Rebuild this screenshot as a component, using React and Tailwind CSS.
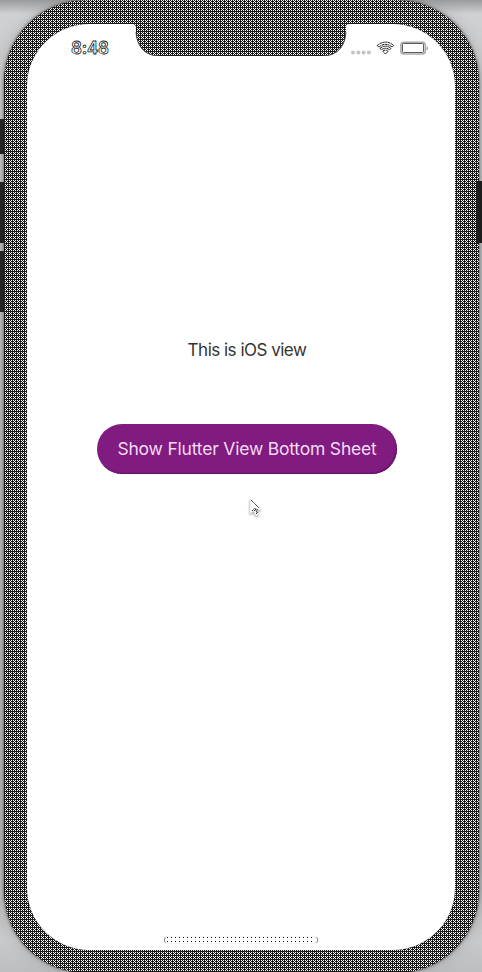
const dither =
  "bg-[#1a1a1a] bg-[conic-gradient(at_1px_1px,transparent_75%,#fff_0),conic-gradient(at_1px_1px,transparent_75%,#fff_0)] bg-[length:2px_2px,4px_4px] bg-[position:1px_0px,2px_1px]";

function StatusIcons() {
  return (
    <svg width="80" height="16" viewBox="0 0 80 16" className="mt-[16px] shrink-0">
      <g fill="#c4c4c4">
        <circle cx="3" cy="12.5" r="2" />
        <circle cx="8.3" cy="12.5" r="2" />
        <circle cx="13.6" cy="12.5" r="2" />
        <circle cx="18.9" cy="12.5" r="2" />
      </g>
      <g fill="none" stroke="#111" strokeWidth="1" strokeDasharray="2.4 0.5">
        <path d="M27.3 5.4Q35.5 -1.2 43.7 5.4L42.2 7.1Q35.5 1.6 28.8 7.1Z" />
        <path d="M30 8.4Q35.5 3.9 41 8.4L39.6 9.9Q35.5 6.6 31.4 9.9Z" />
        <path d="M32.8 11.2Q35.5 9 38.2 11.2L35.5 14Z" />
      </g>
      <rect x="50.9" y="2.4" width="24.4" height="11.6" rx="3" fill="#fff" stroke="#aaa" strokeWidth="1.6" />
      <rect x="52.5" y="3.5" width="21" height="9" rx="1" fill="#fff" stroke="#333" strokeWidth="0.8" />
      <path d="M76.500 6v4.500Q78 10 78 8.200T76.500 6Z" fill="#aaa" />
    </svg>
  );
}

function Notch() {
  return (
    <div className={`${dither} absolute left-[105px] top-0 flex h-[32px] w-[218px] justify-between rounded-b-[25px]`}>
      <div className="h-full w-[4px] rounded-tr-[4px] bg-white" />
      <div className="h-full w-[4px] rounded-tl-[4px] bg-white" />
    </div>
  );
}

function Corner({ flip }) {
  return (
    <svg
      width="30"
      height="24"
      viewBox="0 0 30 24"
      className={flip ? "absolute left-[293px] top-[8px] -scale-x-100" : "absolute left-[105px] top-[8px]"}
    >
      <path d="M0 0H4C4.500 13 12 24 27 24H0Z" fill="#fff" />
      <path d="M4 0C4.500 13 12 24 27 24" fill="none" stroke="#333" strokeWidth="0.8" />
    </svg>
  );
}

export default function App() {
  return (
    <div className="relative flex h-[972px] w-[482px] overflow-hidden bg-[linear-gradient(180deg,#9a9b9d_0,#d0d1d3_14px,#c6c7c9_100px,#b4b5b7_400px,#b0b1b3_850px,#c9cacc_940px,#bdbec0_972px)] font-['Inter','Liberation_Sans',sans-serif] antialiased">
      <div className="absolute left-0 top-[119px] h-[35px] w-[5px] bg-[#222]" />
      <div className="absolute left-0 top-[182px] h-[61px] w-[5px] bg-[#222]" />
      <div className="absolute left-0 top-[251px] h-[61px] w-[5px] bg-[#222]" />
      <div className={`${dither} ml-[4px] h-[973px] w-[475px] shrink-0 rounded-[82px] px-[23px] pt-[24px] shadow-[0_0_3px_0px_#444,0_0_14px_0px_#8888,inset_0_0_1px_0px_#222]`}>
        <div className="relative flex h-[926px] w-[428px] flex-col items-center rounded-[62px] bg-white shadow-[0_0_1px_#111]">
          <Notch />
          <Corner />
          <Corner flip />
          <div className="flex h-[40px] w-full items-start justify-between pl-[44px] pr-[25px]">
            <div className="mt-[14px] text-[17px] font-semibold leading-[20px] tracking-[-0.2px] text-white [-webkit-text-stroke:0.8px_#222]">8:48</div>
            <StatusIcons />
          </div>
          <div className="mt-[275px] ml-[12px] whitespace-nowrap text-[17px] leading-[22px] tracking-[-0.5px] text-[#333]">This is iOS view</div>
          <button className="mt-[63px] ml-[12px] flex h-[50px] w-[300px] shrink-0 items-center justify-center rounded-full bg-[#801b7f] pt-px whitespace-nowrap text-[17.5px] tracking-[-0.2px] text-[#f5daf5] shadow-[inset_-1px_-1px_1px_#641064]">
            Show Flutter View Bottom Sheet
          </button>
          <svg width="16" height="22" viewBox="0 0 16 22" className="absolute left-[221px] top-[473px] drop-shadow-[0_1px_1px_#999]">
            <path d="M2 2V17L5.500 14L8 19L10.500 18L8.500 13H13Z" fill="#fff" stroke="#ddd" strokeWidth=".6" />
            <path d="M3 3L11 11M4 14L7 11L9 16M6 14L8 12L10 13M8 17L10 15" fill="none" stroke="#333" strokeWidth="1" strokeDasharray="1.400 .4" />
          </svg>
          <div className="mt-auto mb-[7px] flex h-[6px] w-[154px] flex-col justify-between rounded-full border-x border-[#888] bg-white px-[2px] pb-px shadow-[0_0_1px_#999]">
            <div className="h-px bg-[linear-gradient(90deg,#111_1px,transparent_1px)] bg-[length:4px_1px]" />
            <div className="h-px bg-[linear-gradient(90deg,#111_1px,transparent_1px)] bg-[length:4px_1px]" />
          </div>
        </div>
      </div>
      <div className="absolute left-[477px] top-[181px] h-[62px] w-[5px] bg-[#1c1c1c]" />
    </div>
  );
}
